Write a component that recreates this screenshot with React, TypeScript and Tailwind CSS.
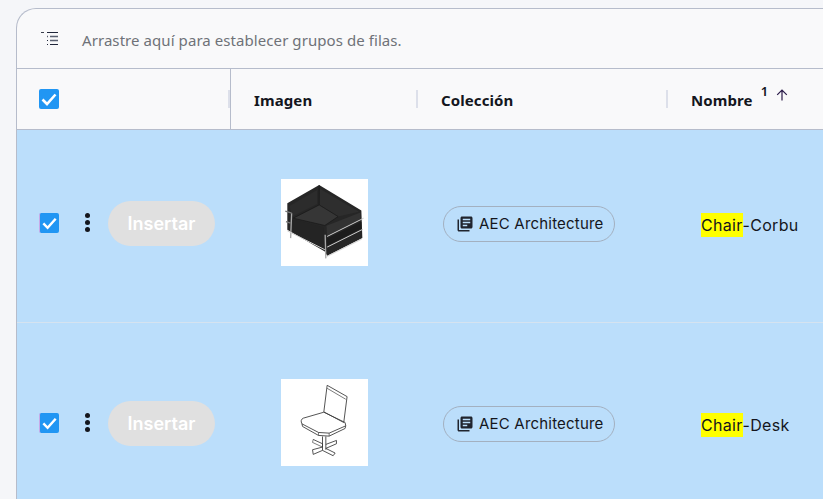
import { MdLibraryBooks } from "react-icons/md";

const interFont = "[font-family:Inter,'Liberation_Sans',sans-serif]";
const gridCols = "grid grid-cols-[214px_187px_250px_1fr]";

const Checkbox = ({ tint }: { tint?: boolean }) => (
    <div
        className={`flex h-5 w-5 shrink-0 items-center justify-center rounded-[2px] bg-[#2196f3] ${
            tint ? "border-l border-[#c9a9e8]" : ""
        }`}
    >
        <svg viewBox="0 0 20 20" className="h-5 w-5" fill="none" stroke="#fff" strokeWidth="2.6">
            <path d="M3.5 10.5L8 15L16.5 5.5" />
        </svg>
    </div>
);

const HeaderCell = ({ label }: { label: string }) => (
    <div className="relative flex h-full items-center pl-[23px] pt-[2px] text-[15px] font-bold tracking-[0.1px] text-[#14161d]">
        <span className="[font-family:'Noto_Sans',sans-serif]">{label}</span>
    </div>
);

const Handle = () => (
    <div className="absolute right-0 top-[21px] h-[18px] w-[2px] bg-[#dde0ea]" />
);

const Corbu = () => (
    <svg viewBox="33 27 262 262" className="h-full w-full">
        <polygon points="52,100 148,45 275,122 278,205 172,258 165,245 52,180" fill="#262626" />
        <polygon points="150,56 268,126 205,140 148,105" fill="#2e2e2e" />
        <polygon points="70,145 148,105 205,140 165,167" fill="#363636" />
        <polygon points="58,108 142,60 142,102 66,140" fill="#2c2c2c" />
        <polygon points="170,168 272,128 272,150 172,198" fill="#333333" />
        <polygon points="70,148 162,172 162,226 70,185" fill="#242424" />
        <polygon points="172,206 275,156 275,176 172,228" fill="#1c1c1c" />
        <path d="M148 45 L148 105 L70 145 M148 105 L205 140 L165 167 L70 145" stroke="#171717" strokeWidth="2" fill="none" />
        <path d="M65 130 L62 205 M166 195 L168 266" stroke="#a8a8a8" strokeWidth="4" fill="none" />
        <path d="M172 200 L282 145 M172 232 L280 178 M172 260 L276 208 M52 183 L165 240" stroke="#d0d0d0" strokeWidth="3" fill="none" />
        <path d="M46 124 L65 130 M48 155 L62 160" stroke="#777777" strokeWidth="4" fill="none" />
    </svg>
);

const Desk = () => (
    <svg viewBox="33 27 262 262" className="h-full w-full">
        <g fill="none" stroke="#3a3a3a" strokeWidth="2.6" strokeLinejoin="round">
            <path d="M172 46 L232 80 L222 158 L162 126 Z" />
            <path d="M172 55 L228 88" strokeWidth="2" />
            <path d="M162 127 L100 145 Q90 150 96 162 L146 188 L178 190 L228 168 L226 158 Z" strokeWidth="2.6" />
            <path d="M96 162 L98 170 L146 197 L178 199 L226 176 L228 168" />
            <path d="M146 188 L146 197 M178 190 L178 199" strokeWidth="2" />
            <path d="M130 209 L158 222 L158 232 L128 240 L130 254 L158 242 L190 258 L196 250 L168 236 L200 222 L200 212 L168 224" />
            <path d="M130 209 L128 218 L158 232" strokeWidth="2" />
            <path d="M158 200 L158 242 M168 200 L168 240" />
        </g>
    </svg>
);

const Row = ({
    name,
    suffix,
    className,
    children,
}: {
    name: string;
    suffix: string;
    className?: string;
    children: React.ReactNode;
}) => (
    <div className={`${gridCols} h-[200px] border-b border-[#d5e3f0] bg-[#bbdefb] ${className ?? ""}`}>
        <div className="flex items-center pl-[22px]">
            <Checkbox tint />
            <div className="ml-[26px] flex w-[5px] flex-col gap-[2px]">
                <span className="h-[5px] w-[5px] rounded-full bg-[#14161d]" />
                <span className="h-[5px] w-[5px] rounded-full bg-[#14161d]" />
                <span className="h-[5px] w-[5px] rounded-full bg-[#14161d]" />
            </div>
            <button
                className={`ml-[18px] mt-px h-[45px] w-[107px] rounded-full bg-[#e0e0e0] text-[18px] font-semibold text-white ${interFont}`}
            >
                Insertar
            </button>
        </div>
        <div className="flex items-center justify-center pb-px">
            <div className="h-[87px] w-[87px] bg-white">{children}</div>
        </div>
        <div className="flex items-center pl-[25px] pt-[2px]">
            <div
                className={`flex h-9 w-[172px] items-center rounded-full border border-[#a3b0c0] pl-[12px] text-[15px] tracking-[0.2px] text-[#14161d] ${interFont}`}
            >
                <MdLibraryBooks size={18} className="mr-[5px] text-[#20242e]" />
                <span className="pt-px">AEC Architecture</span>
            </div>
        </div>
        <div className={`flex items-center pl-[33px] pt-[4px] text-[16px] tracking-[0.3px] text-[#14161d] ${interFont}`}>
            <span className="bg-[#ffff00]">{name}</span>
            {suffix}
        </div>
    </div>
);

const App = () => {
    return (
        <div className="h-[499px] w-[823px] overflow-hidden bg-[#f5f6f9] pl-4 pt-2">
            <div className="w-[840px] rounded-tl-[20px] border-l border-t border-[#b6bccb] bg-[#f9f9fa]">
                <div className="flex h-[60px] items-center border-b border-[#b6bccb] pl-6">
                    <svg viewBox="0 0 17 13" className="h-[13px] w-[17px]" fill="none">
                        <path d="M0 .5h3" stroke="#3a3f4c" strokeWidth="1" />
                        <path d="M6 .5h11M6 8.5h1M6 12.5h1M9 12.5h8" stroke="#20263a" strokeWidth="1" />
                        <path d="M6 4.5h1M9 4.5h8M9 8.5h8" stroke="#5a6070" strokeWidth="1.4" />
                    </svg>
                    <span className="ml-[24px] pt-[3px] text-[15px] tracking-[0.07px] text-[#6f7278] [font-family:'Noto_Sans',sans-serif]">
                        Arrastre aquí para establecer grupos de filas.
                    </span>
                </div>

                <div className={`${gridCols} relative z-10 h-[61px] border-b border-[#b6bccb] bg-[#f9f9fa]`}>
                    <div className="relative flex items-center border-r border-[#b6bccb] pl-[22px]">
                        <Checkbox />
                        <Handle />
                    </div>
                    <div className="relative">
                        <HeaderCell label="Imagen" />
                        <Handle />
                    </div>
                    <div className="relative">
                        <HeaderCell label="Colección" />
                        <Handle />
                    </div>
                    <div className="flex items-center text-[#14161d]">
                        <HeaderCell label="Nombre" />
                        <span className="mb-[15px] ml-[8px] text-[13px] font-semibold [font-family:'Noto_Sans',sans-serif]">1</span>
                        <svg viewBox="0 0 12 12" className="mb-[9px] ml-[8px] h-[12px] w-[12px]" fill="none" stroke="#2a1a48" strokeWidth="1.2">
                            <path d="M6 11.5V1M1.2 5.8L6 1l4.8 4.8" />
                        </svg>
                    </div>
                </div>

                <Row name="Chair" suffix="-Corbu" className="-mt-[7px]">
                    <Corbu />
                </Row>
                <Row name="Chair" suffix="-Desk">
                    <Desk />
                </Row>
            </div>
        </div>
    );
};

export default App;
